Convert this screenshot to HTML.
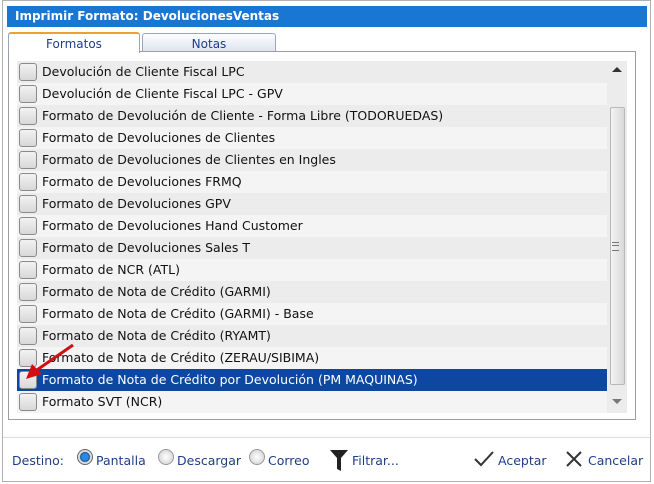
<!DOCTYPE html>
<html><head><style>
body{margin:0;width:654px;height:484px;background:#fff;font-family:"DejaVu Sans","Liberation Sans",sans-serif;font-size:12.5px;position:relative;overflow:hidden}
.abs{position:absolute}
.title{left:7px;top:6px;width:640px;height:21px;background:#1976d2;color:#fff;font-weight:bold;font-size:12px;line-height:21px;padding-left:8px;box-sizing:border-box}
.tab{top:33px;height:19px;border:1px solid #9aa6b8;border-bottom:none;border-radius:3px 3px 0 0;text-align:center;line-height:20px;color:#1f3e8a;font-size:12px;box-sizing:border-box}
.panel{left:8px;top:51px;width:628px;height:369px;border:1px solid #9a9fa3;box-sizing:border-box}
.row{left:17px;width:590px;height:22px;line-height:21px;color:#111;font-size:12.5px;padding-left:25px;box-sizing:border-box;white-space:nowrap}
.cb{position:absolute;left:2px;top:2px;width:18px;height:18px;border:1px solid #8a8a8a;border-radius:3px;box-sizing:border-box;background:linear-gradient(#f2f2f2,#d8d8d8)}
.foot{color:#1f3e8a;font-size:12.5px}
</style></head><body>
<div class="abs" style="left:2px;top:0;width:649px;height:482px;border:1px solid #b0b0b0;box-sizing:border-box"></div>
<div class="abs title">Imprimir Formato: DevolucionesVentas</div>
<div class="abs tab" style="left:8px;width:132px;top:32px;height:21px;background:#fff;border-top:2px solid #f0a030;border-color:#f0a030 #9aa6b8 #fff #9aa6b8">Formatos</div>
<div class="abs tab" style="left:142px;width:134px;background:linear-gradient(#fdfdff,#dde3f0)">Notas</div>
<div class="abs panel"></div>
<div class="abs" style="left:9px;top:51px;width:130px;height:2px;background:#fff"></div>
<div id="list"></div>
<div class="abs" style="left:607px;top:61px;width:20px;height:352px;background:#ececec"></div>
<div class="abs" style="left:610px;top:107px;width:15px;height:278px;background:linear-gradient(90deg,#f4f4f4,#d8d8d8);border:1px solid #b8b8b8;border-radius:2px;box-sizing:border-box"></div>
<div class="abs" style="left:612px;top:67px;width:0;height:0;border-left:5px solid transparent;border-right:5px solid transparent;border-bottom:5px solid #333"></div>
<div class="abs" style="left:612px;top:399px;width:0;height:0;border-left:5px solid transparent;border-right:5px solid transparent;border-top:5px solid #777"></div>
<div class="abs" style="left:612px;top:242px;width:7px;height:7px;border-top:1px solid #777;border-bottom:1px solid #777"></div>
<div class="abs" style="left:612px;top:245px;width:7px;height:1px;background:#777"></div>
<div class="abs" style="left:3px;top:437px;width:647px;height:1px;background:#ddd;box-shadow:0 -2px 3px #eee"></div>
<div class="abs foot" style="left:12px;top:453px">Destino:</div>
<div class="abs" style="left:77px;top:449px;width:14px;height:14px;border-radius:50%;border:1px solid #666;background:radial-gradient(#2a8ae0 35%,#0a4a90 45%,#ddd 55%)"></div>
<div class="abs foot" style="left:96px;top:453px">Pantalla</div>
<div class="abs" style="left:158px;top:449px;width:14px;height:14px;border-radius:50%;border:1px solid #999;background:radial-gradient(#fff,#ccc)"></div>
<div class="abs foot" style="left:177px;top:453px">Descargar</div>
<div class="abs" style="left:249px;top:449px;width:14px;height:14px;border-radius:50%;border:1px solid #999;background:radial-gradient(#fff,#ccc)"></div>
<div class="abs foot" style="left:268px;top:453px">Correo</div>
<svg class="abs" style="left:330px;top:450px" width="18" height="22"><path d="M0 0H18L11 8V21L7 19V8Z" fill="#222"/></svg>
<div class="abs foot" style="left:352px;top:453px">Filtrar...</div>
<svg class="abs" style="left:474px;top:451px" width="20" height="16"><path d="M1 8L7 14L19 1" stroke="#333" stroke-width="2" fill="none"/></svg>
<div class="abs foot" style="left:498px;top:453px">Aceptar</div>
<svg class="abs" style="left:566px;top:451px" width="16" height="16"><path d="M1 1L15 15M15 1L1 15" stroke="#333" stroke-width="2"/></svg>
<div class="abs foot" style="left:588px;top:453px">Cancelar</div>
<svg class="abs" style="left:20px;top:342px" width="60" height="45"><path d="M53 3L14 30" stroke="#d01010" stroke-width="3"/><path d="M6 37L12 22L22 32Z" fill="#d01010"/></svg>
<script>
var items=["Devolución de Cliente Fiscal LPC","Devolución de Cliente Fiscal LPC - GPV","Formato de Devolución de Cliente - Forma Libre (TODORUEDAS)","Formato de Devoluciones de Clientes","Formato de Devoluciones de Clientes en Ingles","Formato de Devoluciones FRMQ","Formato de Devoluciones GPV","Formato de Devoluciones Hand Customer","Formato de Devoluciones Sales T","Formato de NCR (ATL)","Formato de Nota de Crédito (GARMI)","Formato de Nota de Crédito (GARMI) - Base","Formato de Nota de Crédito (RYAMT)","Formato de Nota de Crédito (ZERAU/SIBIMA)","Formato de Nota de Crédito por Devolución (PM MAQUINAS)","Formato SVT (NCR)"];
var h="";items.forEach(function(t,i){var sel=i==14;var bg=sel?"#0d47a1":(i%2?"#f4f4f4":"#ececec");
h+='<div class="abs row" style="top:'+(61+i*22)+'px;background:'+bg+';color:'+(sel?'#fff':'#111')+'"><span class="cb"></span>'+t+'</div>';});
document.getElementById("list").innerHTML=h;
</script>
</body></html>
